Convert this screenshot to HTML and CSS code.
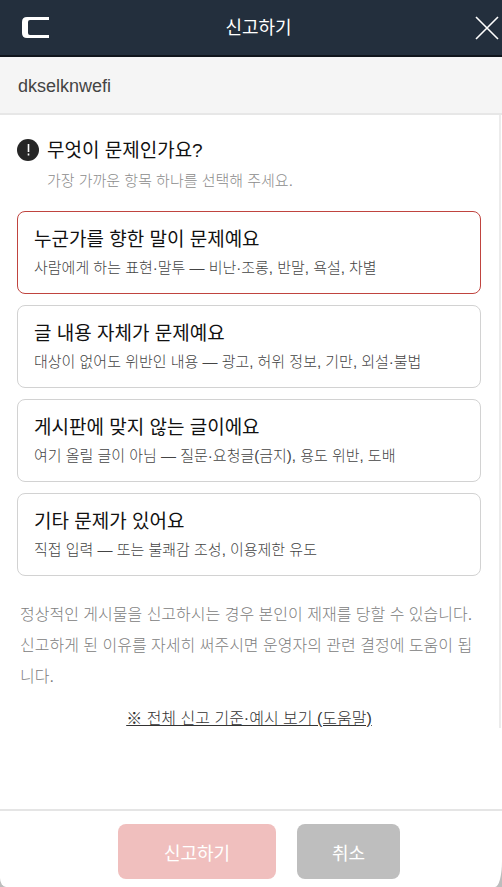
FILE: index.html
```html
<!DOCTYPE html>
<html lang="ko">
<head>
  <meta charset="UTF-8" />
  <meta name="viewport" content="width=device-width, initial-scale=1.0" />
  <title>신고하기</title>
  <link rel="stylesheet" href="styles.css">
</head>
<body>
  <form class="page">
    <header class="header">
      <a href="#" class="logo" aria-label="홈">
        <svg width="28" height="22" viewBox="0 0 28 22">
          <path fill="#fff" fill-rule="evenodd" d="M5 0H27V3H8Q6 3 6 5V16Q6 18 8 18H27V21H5Q0 21 0 16V5Q0 0 5 0Z" />
        </svg>
      </a>
      <h1>신고하기</h1>
      <button type="button" class="close" aria-label="닫기">
        <svg width="24" height="24" viewBox="0 0 24 24">
          <path stroke="#fff" stroke-width="1.6" d="M1 1L23 23M23 1L1 23" />
        </svg>
      </button>
    </header>

    <div class="subject">dkselknwefi</div>

    <main class="content">
      <div class="question">
        <svg class="mark" width="22" height="22" viewBox="0 0 22 22">
          <circle cx="11" cy="11" r="11" fill="#262626" />
          <path stroke="#fff" stroke-width="1.6" d="M11.5 5V13M11.5 14.5V16.5" />
        </svg>
        <div>
          <h2>무엇이 문제인가요?</h2>
          <p>가장 가까운 항목 하나를 선택해 주세요.</p>
        </div>
      </div>

      <div class="options">
        <label class="option">
          <input type="radio" name="reason" value="person" checked />
          <span class="option-title">누군가를 향한 말이 문제예요</span>
          <span class="option-desc">사람에게 하는 표현·말투 — 비난·조롱, 반말, 욕설, 차별</span>
        </label>
        <label class="option">
          <input type="radio" name="reason" value="content" />
          <span class="option-title">글 내용 자체가 문제예요</span>
          <span class="option-desc">대상이 없어도 위반인 내용 — 광고, 허위 정보, 기만, 외설·불법</span>
        </label>
        <label class="option">
          <input type="radio" name="reason" value="board" />
          <span class="option-title">게시판에 맞지 않는 글이에요</span>
          <span class="option-desc">여기 올릴 글이 아님 — 질문·요청글(금지), 용도 위반, 도배</span>
        </label>
        <label class="option">
          <input type="radio" name="reason" value="etc" />
          <span class="option-title">기타 문제가 있어요</span>
          <span class="option-desc">직접 입력 — 또는 불쾌감 조성, 이용제한 유도</span>
        </label>
      </div>

      <p class="notice">정상적인 게시물을 신고하시는 경우 본인이 제재를 당할 수 있습니다. 신고하게 된 이유를 자세히 써주시면 운영자의 관련 결정에 도움이 됩니다.</p>
      <a href="#" class="help">※ 전체 신고 기준·예시 보기 (도움말)</a>
    </main>

    <footer class="footer">
      <button type="submit" class="btn btn-submit" disabled>신고하기</button>
      <button type="button" class="btn btn-cancel">취소</button>
    </footer>
  </form>
</body>
</html>
```

FILE: styles.css
```css
* {
  box-sizing: border-box;
}
body {
  margin: 0;
  background: #bdbdbd;
  color: #111;
  font-family: "Liberation Sans", "Noto Sans CJK KR", sans-serif;
  font-weight: 300;
}
h1, h2, p {
  margin: 0;
}
button {
  border: none;
  font-family: inherit;
  cursor: pointer;
}
svg {
  display: block;
}
.page {
  display: flex;
  flex-direction: column;
  min-height: 100vh;
  background: #fff;
  border-radius: 0 0 7px 6px / 0 0 26px 9px;
}
.header {
  display: grid;
  grid-template-columns: 1fr auto 1fr;
  align-items: center;
  height: 57px;
  padding: 0 3px 0 22px;
  background: #232f3d;
  border-bottom: 2px solid #10151c;
}
.header h1 {
  color: #fff;
  font-size: 18px;
  font-weight: 400;
  line-height: 24px;
  padding-right: 4px;
}
.logo {
  justify-self: start;
}
.close {
  justify-self: end;
  padding: 0;
  background: none;
}
.subject {
  height: 58px;
  padding: 0 18px;
  background: #f5f5f5;
  border-bottom: 2px solid #e7e7e7;
  color: #444;
  font-size: 18px;
  font-weight: 400;
  line-height: 58px;
}
.content {
  display: flex;
  flex-direction: column;
  padding: 22px 18px 0 17px;
  border-right: 2px solid #ececec;
  margin-right: 1px;
}
.question {
  display: flex;
  gap: 8px;
}
.mark {
  margin-top: 2px;
}
.question h2 {
  font-size: 19px;
  font-weight: 400;
  line-height: 28px;
}
.question p {
  color: #8c8c8c;
  font-size: 15px;
  line-height: 32px;
}
.options {
  display: flex;
  flex-direction: column;
  gap: 11px;
  margin-top: 14px;
}
.option {
  display: flex;
  flex-direction: column;
  padding: 14px 16px 11px;
  border: 1px solid #d2d2d2;
  border-radius: 8px;
  cursor: pointer;
}
.option:has(input:checked) {
  border-color: #c0443f;
}
.option input {
  position: absolute;
  opacity: 0;
  pointer-events: none;
}
.option-title {
  font-size: 19px;
  font-weight: 400;
  line-height: 28px;
}
.option-desc {
  color: #444;
  font-size: 15px;
  line-height: 28px;
}
.notice {
  margin-top: 23px;
  padding: 0 3px;
  color: #808080;
  font-size: 16px;
  line-height: 31px;
}
.help {
  align-self: center;
  margin-top: 18px;
  color: #333;
  font-size: 16px;
  line-height: 18px;
}
.footer {
  display: flex;
  justify-content: center;
  gap: 21px;
  margin-top: auto;
  padding: 13px 0 8px 16px;
  border-top: 2px solid #e5e5e5;
}
.btn {
  height: 55px;
  border-radius: 8px;
  color: #fff;
  font-size: 18px;
  font-weight: 400;
}
.btn-submit {
  width: 158px;
  background: #f0bfbe;
}
.btn-cancel {
  width: 103px;
  background: #bebebe;
}
```
